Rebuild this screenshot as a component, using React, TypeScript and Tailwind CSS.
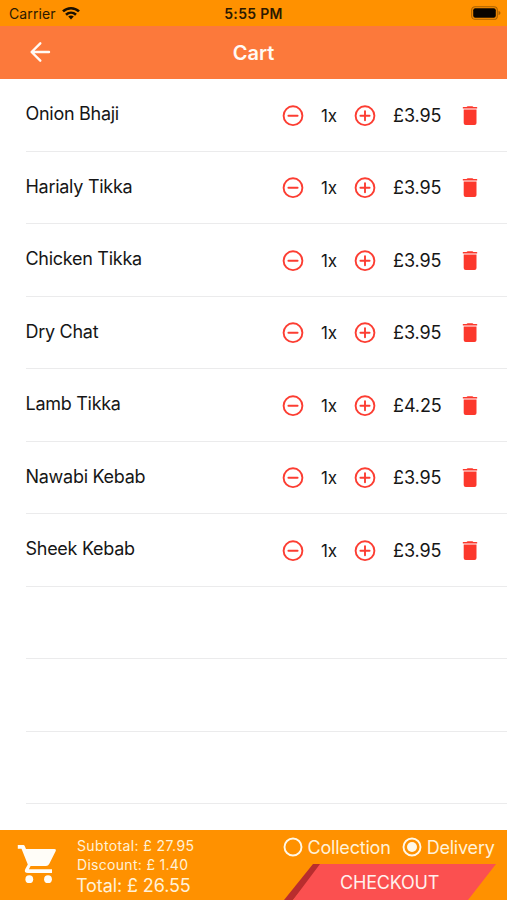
import React from "react";

const items = [
  { name: "Onion Bhaji", price: "£3.95" },
  { name: "Harialy Tikka", price: "£3.95" },
  { name: "Chicken Tikka", price: "£3.95" },
  { name: "Dry Chat", price: "£3.95" },
  { name: "Lamb Tikka", price: "£4.25" },
  { name: "Nawabi Kebab", price: "£3.95" },
  { name: "Sheek Kebab", price: "£3.95" },
];

function CircleButton({ plus = false }: { plus?: boolean }) {
  return (
    <button className="block h-[22px] w-[22px] shrink-0 text-[#fc3d32]" aria-label={plus ? "Increase" : "Decrease"}>
      <svg viewBox="0 0 22 22" className="block h-full w-full" fill="none" stroke="currentColor" strokeWidth="1.9">
        <circle cx="11" cy="10.7" r="9.4" />
        <path d={plus ? "M6.4 10.7H15.6M11 6.1V15.3" : "M6.4 10.7H15.6"} strokeLinecap="round" />
      </svg>
    </button>
  );
}

function Trash() {
  return (
    <svg viewBox="0 0 16 20" className="block h-5 w-4 shrink-0 text-[#fc382c]" fill="currentColor">
      <path d="M4.6 .9Q5 .2 5.8.2H10.2Q11 .2 11.4 .9H14.5Q15.3 .9 15.3 1.7T14.5 2.6H1.5Q.7 2.6.7 1.7T1.5 .9Z" />
      <path d="M1.700 3.500H14.500V16.900Q14.500 18.900 12.500 18.900H3.700Q1.700 18.900 1.700 16.900Z" />
    </svg>
  );
}

function Row({ item }: { item?: (typeof items)[number] }) {
  return (
    <li className="ml-[25.5px] h-[72.5px] border-b-[1.5px] border-[#ebebec]">
      {item && (
        <div className="flex h-[72px] items-center pt-px">
          <span className="w-[256.5px] shrink-0 pb-[3px] text-[18px] leading-6 tracking-[-0.28px]">{item.name}</span>
          <CircleButton />
          <span className="w-[50px] shrink-0 text-center text-[17px] leading-6 tracking-[-0.1px]">1x</span>
          <CircleButton plus />
          <span className="ml-[17px] w-[52px] shrink-0 whitespace-nowrap text-[18px] leading-6 tracking-[-0.1px]">{item.price}</span>
          <span className="ml-[17px]"><Trash /></span>
        </div>
      )}
    </li>
  );
}

function Radio({ label, checked = false }: { label: string; checked?: boolean }) {
  return (
    <label className="flex items-center gap-[5px]">
      <svg viewBox="0 0 20 20" className="h-5 w-5 shrink-0">
        <circle cx="10" cy="10" r="8.5" fill="none" stroke="#fff8e8" strokeWidth="1.9" />
        {checked && <circle cx="10" cy="10" r="5" fill="#fff8e8" />}
      </svg>
      <span className="whitespace-nowrap pt-px text-[18px] leading-5 tracking-[-0.2px]">{label}</span>
    </label>
  );
}

export default function App() {
  return (
    <div className="flex h-[900px] w-[507px] flex-col overflow-hidden bg-white font-['Inter','Liberation_Sans',sans-serif] text-[#161616]">
      <div className="grid h-[26px] shrink-0 grid-cols-3 items-center bg-[#ff9100] text-[14px] leading-4 text-[#2b1900]">
        <div className="flex items-center gap-[6px] pl-[9px] pt-[2px]">
          <span className="tracking-[0.1px]">Carrier</span>
          <svg viewBox="0 0 18 13" className="-mt-[2px] h-[14px] w-[18px]" fill="none" stroke="#1a1000" strokeWidth="2.6">
            <path d="M1 4.9C5.5.6 12.5.6 17 4.9" />
            <path d="M4 8.2C6.9 5.5 11.1 5.5 14 8.2" />
            <path d="M9 12.9L6.2 10C7.8 8.6 10.2 8.6 11.8 10Z" fill="#1a1000" stroke="none" />
          </svg>
        </div>
        <div className="pt-[2px] text-center font-semibold tracking-[0.3px]">5:55 PM</div>
        <div className="flex justify-end pr-[6px]">
          <svg viewBox="0 0 30 14" className="h-[14px] w-[30px]">
            <rect x=".7" y=".7" width="25.6" height="12.6" rx="3.4" fill="none" stroke="#a86000" strokeWidth="1.1" />
            <rect x="2.2" y="2.2" width="22.6" height="9.6" rx="2" fill="#080400" />
            <path d="M27.5 4.7Q29.5 5.4 29.5 7T27.5 9.3Z" fill="#a86000" />
          </svg>
        </div>
      </div>

      <header className="grid h-[53px] shrink-0 grid-cols-3 items-center bg-[#fc793b] text-[#fffaf5]">
        <button className="-mt-[2px] ml-[29px] w-[22px]" aria-label="Back">
          <svg viewBox="0 0 22 22" className="h-[22px] w-[22px]" fill="none" stroke="currentColor" strokeWidth="2.4" strokeLinecap="round" strokeLinejoin="round">
            <path d="M20 11H3M11.3 2.3L2.6 11L11.3 19.7" />
          </svg>
        </button>
        <h1 className="text-center text-[20px] font-semibold leading-6">Cart</h1>
      </header>

      <ul className="h-[751px] shrink-0 overflow-hidden">
        {items.map((item) => <Row key={item.name} item={item} />)}
        <Row />
        <Row />
        <Row />
      </ul>

      <footer className="flex h-[70px] shrink-0 bg-[#ff9100] text-[#fff1d8]">
        <svg viewBox="0 0 40 40" className="ml-[17px] mt-[14px] h-[40px] w-[40px] shrink-0" fill="#fffdf8">
          <path d="M.8 1H6.500Q7.300 1 7.700 1.900L9 5H37.300Q39.600 5 38.600 7.200L32.200 20Q31.200 22 29 22H13.600L11.900 25.300H35V29H11Q6.500 29 8.300 25L10.800 20.500L4.500 4.800H.8Z" />
          <circle cx="12.3" cy="35.200" r="3.900" />
          <circle cx="31" cy="35.200" r="3.900" />
        </svg>
        <div className="ml-[20px] flex w-[205px] flex-col pt-[6px] text-[14px] leading-[19px]">
          <span className="tracking-[0.38px]">Subtotal: £ 27.95</span>
          <span className="tracking-[0.3px]">Discount: £ 1.40</span>
          <span className="-ml-px pt-px text-[18px] leading-[22px] tracking-[-0.1px]">Total: £ 26.55</span>
        </div>
        <div className="flex flex-1 flex-col">
          <div className="ml-[0.5px] flex h-[34px] items-center gap-[11px] whitespace-nowrap">
            <Radio label="Collection" />
            <Radio label="Delivery" checked />
          </div>
          <button className="ml-px grid h-[36px] w-[213px]">
            <svg viewBox="0 0 213 36" className="col-start-1 row-start-1 h-[36px] w-[213px]">
              <path d="M30 0H40L10 36H1Z" fill="#b92d2e" />
              <path d="M37 0H213L185 36H10Z" fill="#fb5050" />
            </svg>
            <span className="col-start-1 row-start-1 self-center pl-[57px] pt-px text-left text-[18px] leading-6 tracking-[-0.2px] text-[#fff0ed]">CHECKOUT</span>
          </button>
        </div>
      </footer>
    </div>
  );
}
